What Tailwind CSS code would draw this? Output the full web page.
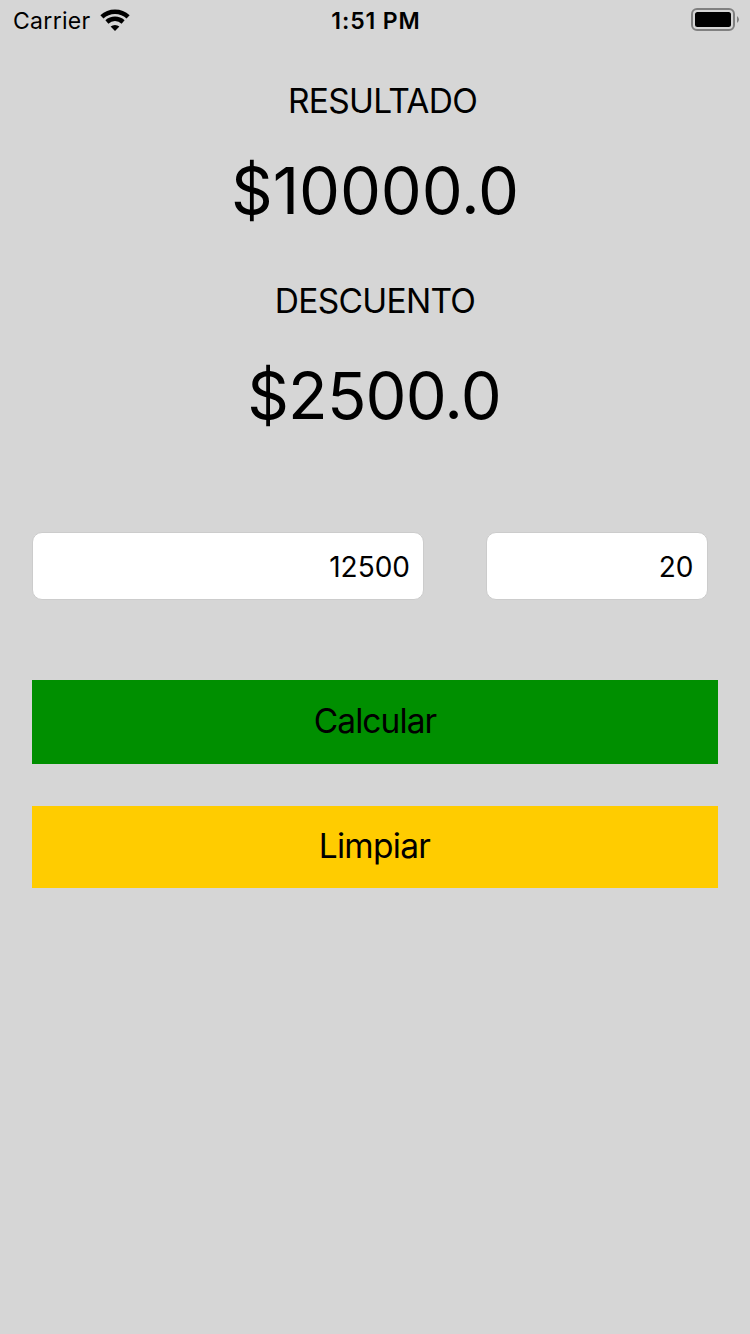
<!DOCTYPE html>
<html lang="es">
<head>
<meta charset="utf-8">
<title>Calculadora de descuento</title>
<script src="https://cdn.jsdelivr.net/npm/@tailwindcss/browser@4"></script>
</head>
<body class="w-[750px] h-[1334px] overflow-hidden bg-[#d6d6d6] text-black font-['Inter',sans-serif]">
<header class="h-10 grid grid-cols-3 items-center pl-[13px] pr-[11px] text-[23px]">
<div class="flex items-center gap-[9px]"><span class="pt-[2px] tracking-[0.3px]">Carrier</span>
<svg width="30" height="22" viewBox="0 0 30 22"><path d="M1.900 7.900a19 19 0 0 1 26.200 0M6.900 13a12 12 0 0 1 16.200 0" fill="none" stroke="#000" stroke-width="4.500"/><path d="M15 22l-4.400-4.400a6.500 6.500 0 0 1 8.800 0z"/></svg></div>
<span class="pt-[2px] text-center font-semibold tracking-[0.9px]">1:51 PM</span>
<svg class="justify-self-end" width="48" height="24" viewBox="0 0 48 24"><rect x="1" y="1" width="42" height="21" rx="5" fill="none" stroke="#808080" stroke-width="2"/><rect x="4" y="4" width="36" height="15" rx="2.500"/><path d="M46 8q4 3.500 0 7z" fill="#808080"/></svg>
</header>
<main class="flex flex-col">
<h2 class="h-10 mt-10 pl-[15px] text-center text-[33.500px] leading-[42px] tracking-[-0.7px]">RESULTADO</h2>
<p class="h-20 mt-[30px] text-center text-[65px] leading-[81px] tracking-[-0.1px]">$10000.0</p>
<h2 class="h-10 mt-[50px] text-center text-[33.500px] leading-[42px] tracking-[-0.7px]">DESCUENTO</h2>
<p class="h-20 mt-[35px] pr-[2px] text-center text-[65px] leading-[81px] tracking-[-0.8px]">$2500.0</p>
<div class="flex mt-[97px] ml-8 gap-[62px] text-[28px]">
<div class="w-[392px] h-[68px] rounded-[10px] border border-[#cccccc] bg-white flex items-center justify-end pt-px pr-[13px]">12500</div>
<div class="w-[222px] h-[68px] rounded-[10px] border border-[#cccccc] bg-white flex items-center justify-end pt-px pr-[14px] tracking-[-0.3px]">20</div>
</div>
<button class="mx-8 mt-20 h-[84px] pb-px bg-[#008f00] text-[33.500px] tracking-[-0.9px]">Calcular</button>
<button class="mx-8 mt-[42px] h-[82px] pb-px pr-px bg-[#ffcc00] text-[33.500px] tracking-[-0.7px]">Limpiar</button>
</main>
</body>
</html>
